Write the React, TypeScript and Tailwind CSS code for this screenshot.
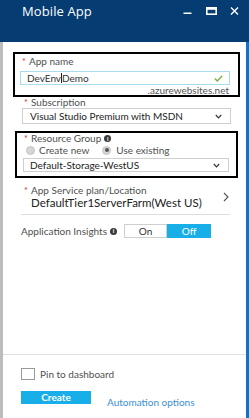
import React from "react";

function Info() {
  return (
    <span className="inline-flex items-center justify-center w-[7px] h-[7px] rounded-full bg-[#3a3a3a] text-white text-[6px] leading-none font-bold ml-[3px]">
      i
    </span>
  );
}

function ChevronDown() {
  return (
    <svg width="7" height="5" viewBox="0 0 7 5" className="shrink-0">
      <path d="M0.8 1 L3.5 3.8 L6.2 1" fill="none" stroke="#333" strokeWidth="1.2" />
    </svg>
  );
}

function Label({ text, info = false }: { text: string; info?: boolean }) {
  return (
    <div className="flex items-center text-[10px] leading-[11px] text-[#505050] h-[11px]">
      <span className="text-[#d0312d] w-[7px] text-[9px] leading-[11px]">*</span>
      <span>{text}</span>
      {info && <Info />}
    </div>
  );
}

export default function App() {
  return (
    <div className="w-[249px] h-[418px] flex flex-col overflow-hidden bg-white font-['Lato',_'Open_Sans',_sans-serif]">
      {/* Header */}
      <div className="h-[42px] bg-[#053c72] flex items-start pl-[22px] pr-[10px] shrink-0">
        <div className="text-white text-[13px] leading-[16px] mt-[3px] tracking-[0.1px] font-['Open_Sans',_sans-serif]">Mobile App</div>
        <div className="flex-1" />
        <div className="flex items-start mt-[7px] gap-[13px]">
          <svg width="10" height="8" viewBox="0 0 10 8">
            <rect x="0.5" y="5.5" width="8" height="1.5" fill="#fff" />
          </svg>
          <svg width="11" height="8" viewBox="0 0 11 8">
            <rect x="0.8" y="0.8" width="9.4" height="6.4" fill="none" stroke="#fff" strokeWidth="1.6" />
            <rect x="0.8" y="0.8" width="9.4" height="2" fill="#fff" />
          </svg>
          <svg width="9" height="8" viewBox="0 0 9 8">
            <path d="M1 0.5 L8 7.5 M8 0.5 L1 7.5" stroke="#fff" strokeWidth="1.4" />
          </svg>
        </div>
      </div>

      {/* Body */}
      <div className="flex-1 flex flex-col border-l-[3px] border-l-[#bcbcbc] border-r-[3px] border-r-[#1f6fb6]">
        {/* Box 1 */}
        <div className="ml-[10px] mt-[10px] w-[227px] border-2 border-black pl-[5px] pr-[8px] pt-[2px]">
          <div className="pl-[2px]">
            <Label text="App name" />
          </div>
          <div className="mt-[4px] h-[14px] border border-[#a9dcee] flex items-center px-[6px] text-[10px] leading-[12px] text-[#333]">
            <span>DevEnv</span>
            <span className="w-px h-[10px] bg-[#222]" />
            <span>Demo</span>
            <div className="flex-1" />
            <svg width="9" height="7" viewBox="0 0 9 7">
              <path d="M0.8 3.6 L3.3 6 L8.2 0.8" fill="none" stroke="#7cb342" strokeWidth="1.4" />
            </svg>
          </div>
          <div className="text-right text-[10px] leading-[10px] h-[10px] text-[#555] pr-[1px]">.azurewebsites.net</div>
        </div>

        {/* Subscription */}
        <div className="ml-[19px] mt-0 w-[209px]">
          <div className="pl-[2px]">
            <Label text="Subscription" />
          </div>
          <div className="h-[16px] border border-[#cfcfcf] flex items-center pl-[7px] pr-[8px] text-[10px] leading-[12px] text-[#222]">
            <span>Visual Studio Premium with MSDN</span>
            <div className="flex-1" />
            <ChevronDown />
          </div>
        </div>

        {/* Box 2 */}
        <div className="ml-[12px] mt-[7px] w-[223px] border-2 border-black pl-[6px] pr-[7px] pb-[4px]">
          <div className="pl-[1px]">
            <Label text="Resource Group" info />
          </div>
          <div className="h-[12px] flex items-center text-[10px] leading-[12px] text-[#505050] pl-[3px]">
            <span className="w-[9px] h-[9px] rounded-full bg-[#d6d6d6] border border-[#c4c4c4]" />
            <span className="ml-[4px]">Create new</span>
            <span className="ml-[13px] w-[9px] h-[9px] rounded-full bg-[#d6d6d6] border border-[#c4c4c4] flex items-center justify-center">
              <span className="w-[4px] h-[4px] rounded-full bg-[#555]" />
            </span>
            <span className="ml-[5px]">Use existing</span>
          </div>
          <div className="mt-[2px] h-[14px] border border-[#cfcfcf] flex items-center pl-[6px] pr-[8px] text-[10px] leading-[12px] text-[#222]">
            <span>Default-Storage-WestUS</span>
            <div className="flex-1" />
            <ChevronDown />
          </div>
        </div>

        {/* App service plan */}
        <div className="ml-[19px] mt-[7px] w-[209px] flex items-center">
          <div className="flex-1">
            <div className="pl-[2px]">
              <Label text="App Service plan/Location" />
            </div>
            <div className="text-[11.5px] leading-[13px] text-[#222] pl-[9px]">DefaultTier1ServerFarm(West US)</div>
          </div>
          <svg width="6" height="10" viewBox="0 0 6 10" className="mr-[2px]">
            <path d="M1 1 L5 5 L1 9" fill="none" stroke="#555" strokeWidth="1.1" />
          </svg>
        </div>
        <div className="ml-[18px] mt-[5px] w-[209px] h-px bg-[#dedede]" />

        {/* Application Insights */}
        <div className="ml-[18px] mt-[9px] flex items-center h-[14px]">
          <div className="w-[103px] flex items-center text-[10px] leading-[12px] text-[#505050]">
            <span>Application Insights</span>
            <Info />
          </div>
          <div className="flex h-[14px]">
            <div className="w-[43px] border border-[#cfcfcf] flex items-center justify-center text-[10px] text-[#333]">On</div>
            <div className="w-[44px] bg-[#18aee8] flex items-center justify-center text-[10px] text-white">Off</div>
          </div>
        </div>

        <div className="flex-1" />

        {/* Footer */}
        <div className="border-t border-[#e0e0e0] h-[64px] pl-[18px] pt-[13px]">
          <div className="flex items-center h-[12px]">
            <span className="w-[14px] h-[12px] border border-[#9a9a9a] bg-white" />
            <span className="ml-[5px] text-[10px] leading-[12px] text-[#505050]">Pin to dashboard</span>
          </div>
          <div className="flex items-start mt-[11px]">
            <div className="w-[70px] h-[13px] bg-[#18aee8] flex items-center justify-center text-[10px] font-bold text-white">Create</div>
            <div className="ml-[16px] mt-[5px] text-[10px] leading-[12px] text-[#3a8fd4]">Automation options</div>
          </div>
        </div>
      </div>
    </div>
  );
}
